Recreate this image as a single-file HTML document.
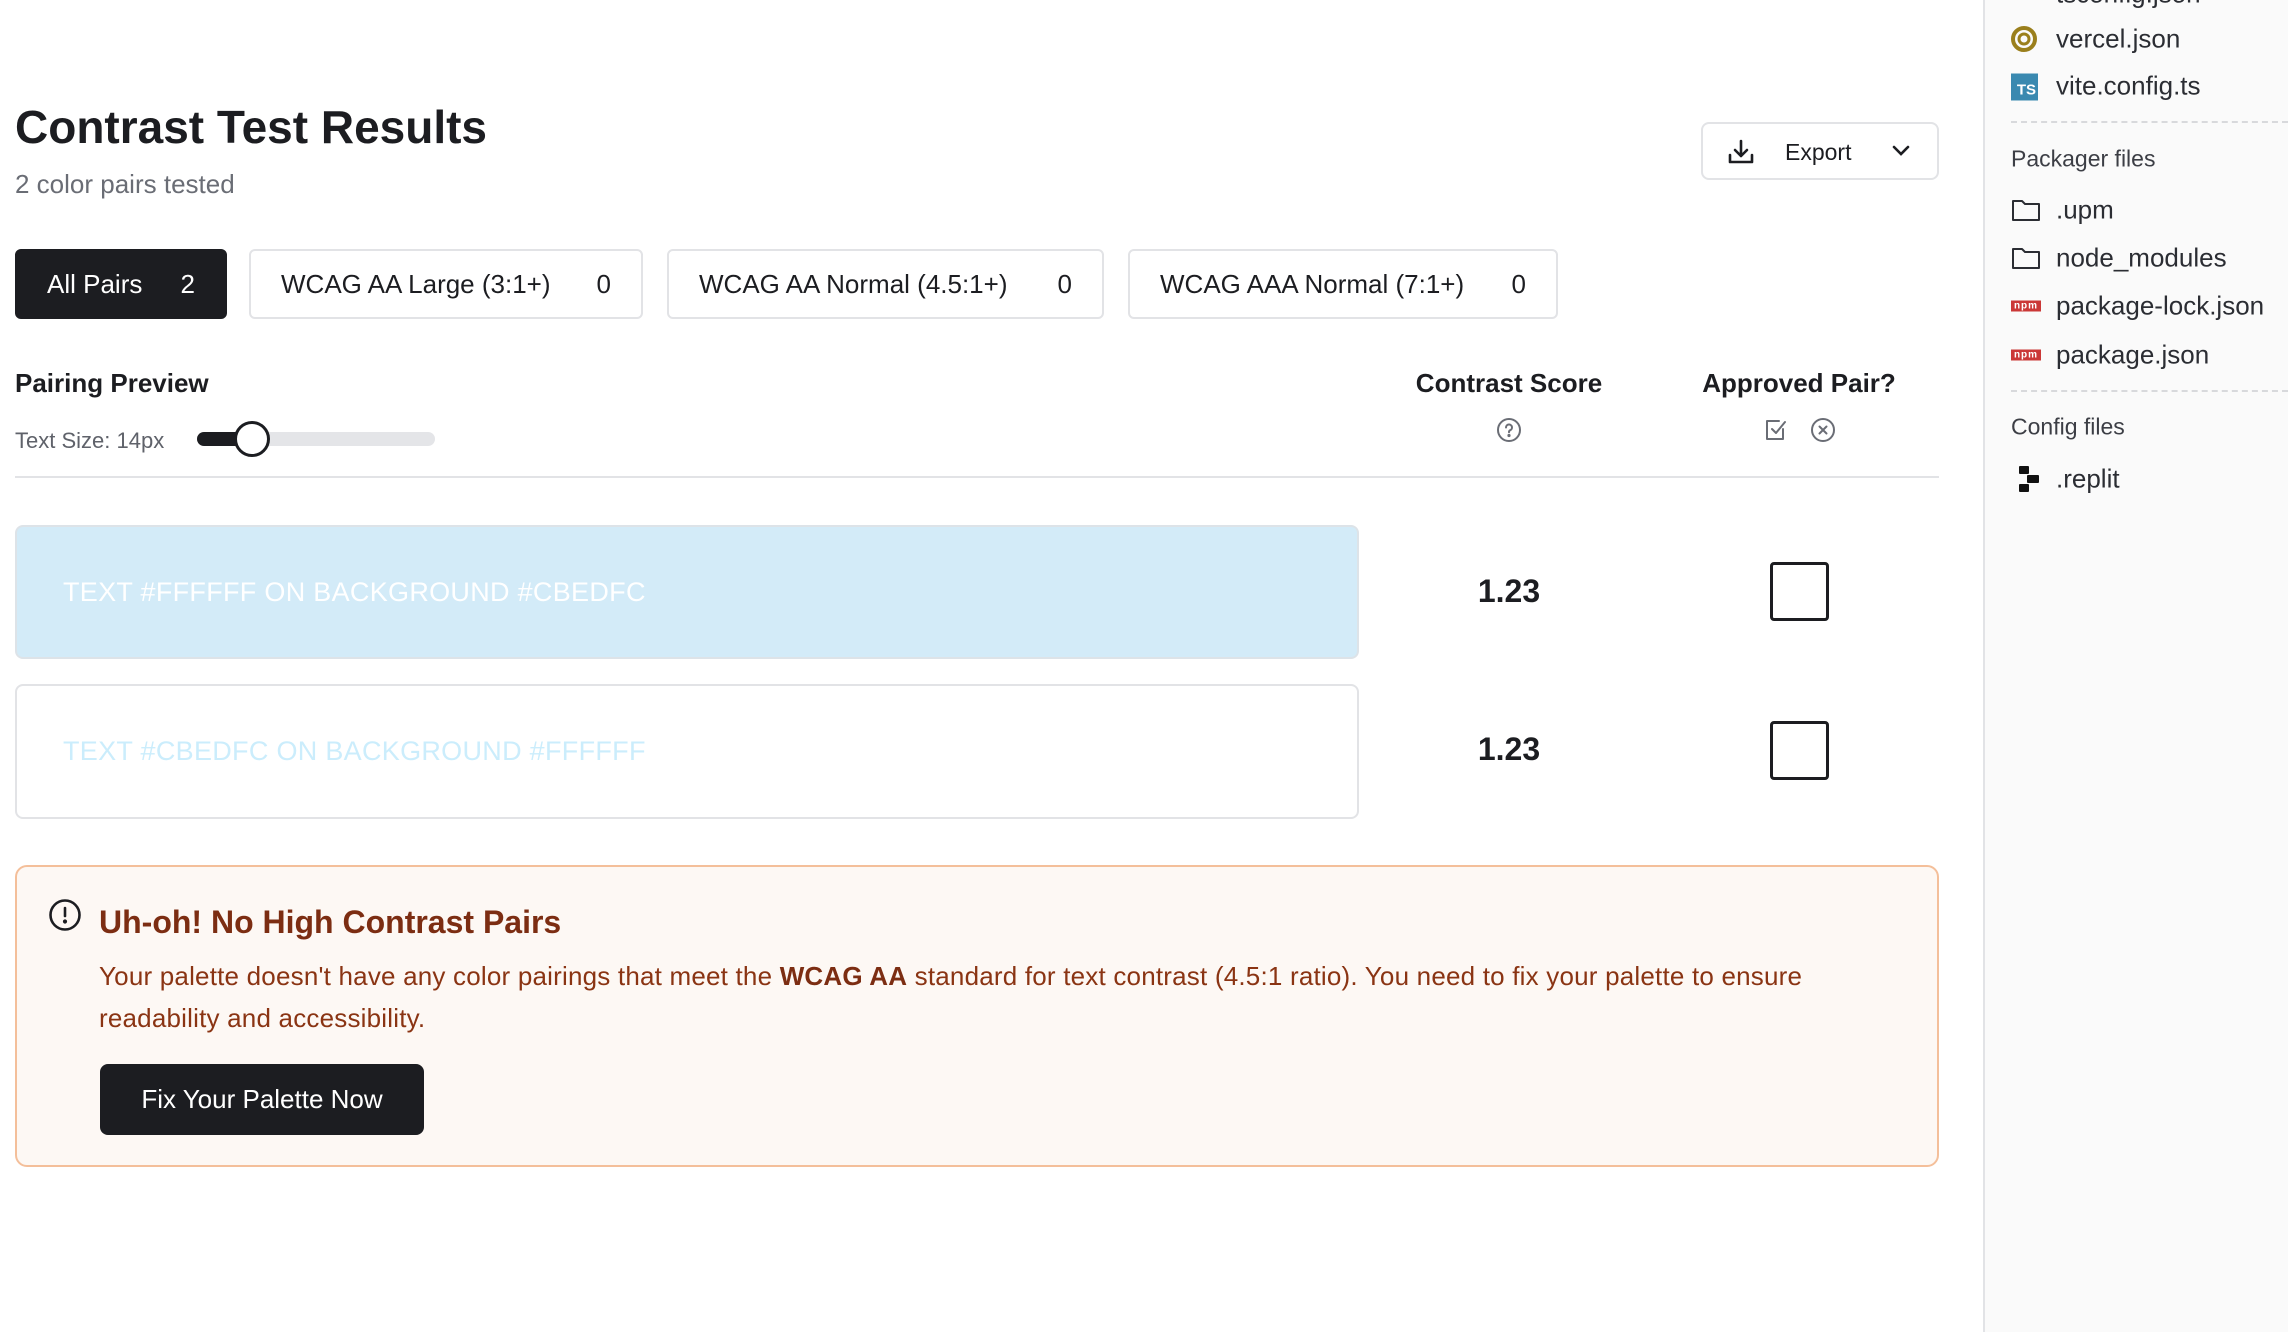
<!DOCTYPE html>
<html><head><meta charset="utf-8"><style>
*{box-sizing:border-box;margin:0;padding:0}
body{width:2288px;height:1332px;background:#fff;font-family:"Liberation Sans",sans-serif;color:#1c1d21;position:relative;overflow:hidden}
.a{position:absolute;white-space:nowrap}
.tab{position:absolute;top:249px;height:70px;border:2px solid #e2e3e6;border-radius:6px;font-size:26px;display:flex;align-items:center;padding-left:30px;background:#fff}
.tab b{font-weight:normal;position:absolute;right:30px}
.side{position:absolute;left:1983px;top:0;width:305px;height:1332px;background:#fafafa;border-left:2px solid #e2e3e6}
.si{position:absolute;left:71px;font-size:26px;color:#2b2d33;transform:translateY(-50%)}
.ic{position:absolute;left:26px;transform:translateY(-50%)}
.sh{position:absolute;left:26px;font-size:23px;color:#3c3e45;transform:translateY(-50%)}
.dash{position:absolute;left:26px;right:0;border-top:2px dashed #d8d9dc}
.npm{width:30px;height:11px;background:#cb3837;color:#fff;font-size:10px;font-weight:bold;line-height:11px;text-align:center;letter-spacing:1px}
</style></head><body>
<div class="a" style="left:15px;top:100px;font-size:46px;font-weight:bold">Contrast Test Results</div>
<div class="a" style="left:15px;top:169px;font-size:26px;color:#6a6d75">2 color pairs tested</div>

<div class="a" style="left:1701px;top:122px;width:238px;height:58px;border:2px solid #e2e3e6;border-radius:8px;font-size:23px">
<svg class="a" style="left:24px;top:15px" width="28" height="26" viewBox="0 0 28 26" fill="none" stroke="#1c1d21" stroke-width="2.6" stroke-linecap="round" stroke-linejoin="round"><path d="M14 2v15M8 11l6 6 6-6M3 16v7h22v-7"/></svg>
<span class="a" style="left:82px;top:15px">Export</span>
<svg class="a" style="left:188px;top:20px" width="20" height="14" viewBox="0 0 20 14" fill="none" stroke="#1c1d21" stroke-width="2.6" stroke-linecap="round"><path d="M3 3l7 7 7-7"/></svg>
</div>

<div class="tab" style="left:15px;width:212px;background:#1c1d21;border-color:#1c1d21;color:#fff">All Pairs<b>2</b></div>
<div class="tab" style="left:249px;width:394px">WCAG AA Large (3:1+)<b>0</b></div>
<div class="tab" style="left:667px;width:437px">WCAG AA Normal (4.5:1+)<b>0</b></div>
<div class="tab" style="left:1128px;width:430px">WCAG AAA Normal (7:1+)<b>0</b></div>

<div class="a" style="left:15px;top:368px;font-size:26px;font-weight:bold">Pairing Preview</div>
<div class="a" style="left:15px;top:428px;font-size:22px;color:#5f626a">Text Size: 14px</div>
<div class="a" style="left:197px;top:432px;width:238px;height:14px;border-radius:7px;background:#e4e5e8"></div>
<div class="a" style="left:197px;top:432px;width:56px;height:14px;border-radius:7px;background:#1c1d21"></div>
<div class="a" style="left:234px;top:421px;width:36px;height:36px;border-radius:50%;background:#fff;border:3px solid #1c1d21"></div>
<div class="a" style="left:1409px;top:368px;width:200px;text-align:center;font-size:26px;font-weight:bold">Contrast Score</div>
<svg class="a" style="left:1496px;top:417px" width="26" height="26" viewBox="0 0 26 26" fill="none" stroke="#6a6d75" stroke-width="2"><circle cx="13" cy="13" r="11"/><path d="M10 10.5a3 3 0 1 1 4 2.8c-.8.4-1 1-1 2" stroke-linecap="round"/><circle cx="13" cy="18.5" r=".6" fill="#6a6d75"/></svg>
<div class="a" style="left:1679px;top:368px;width:240px;text-align:center;font-size:26px;font-weight:bold">Approved Pair?</div>
<svg class="a" style="left:1763px;top:417px" width="26" height="26" viewBox="0 0 26 26" fill="none" stroke="#6a6d75" stroke-width="2" stroke-linecap="round" stroke-linejoin="round"><path d="M20 12v10H4V4h12"/><path d="M9 12l4 4 9-11"/></svg>
<svg class="a" style="left:1810px;top:417px" width="26" height="26" viewBox="0 0 26 26" fill="none" stroke="#6a6d75" stroke-width="2" stroke-linecap="round"><circle cx="13" cy="13" r="11"/><path d="M9.5 9.5l7 7M16.5 9.5l-7 7"/></svg>
<div class="a" style="left:15px;top:476px;width:1924px;height:2px;background:#e2e3e6"></div>

<div class="a" style="left:15px;top:525px;width:1344px;height:134px;background:#d3ebf8;border:2px solid #dde3e8;border-radius:8px"></div>
<div class="a" style="left:63px;top:577px;font-size:27px;color:#fff;letter-spacing:0.3px">TEXT #FFFFFF ON BACKGROUND #CBEDFC</div>
<div class="a" style="left:1409px;top:573px;width:200px;text-align:center;font-size:32px;font-weight:bold">1.23</div>
<div class="a" style="left:1770px;top:562px;width:59px;height:59px;border:3px solid #1c1d21;border-radius:4px"></div>

<div class="a" style="left:15px;top:684px;width:1344px;height:135px;background:#fff;border:2px solid #e2e3e6;border-radius:8px"></div>
<div class="a" style="left:63px;top:736px;font-size:27px;color:#cbedfc;letter-spacing:0.3px">TEXT #CBEDFC ON BACKGROUND #FFFFFF</div>
<div class="a" style="left:1409px;top:731px;width:200px;text-align:center;font-size:32px;font-weight:bold">1.23</div>
<div class="a" style="left:1770px;top:721px;width:59px;height:59px;border:3px solid #1c1d21;border-radius:4px"></div>

<div class="a" style="left:15px;top:865px;width:1924px;height:302px;background:#fdf8f4;border:2px solid #f4bf9a;border-radius:12px"></div>
<svg class="a" style="left:48px;top:898px" width="34" height="34" viewBox="0 0 34 34" fill="none" stroke="#1c1d21" stroke-width="2.6" stroke-linecap="round"><circle cx="17" cy="17" r="14.5"/><path d="M17 10v8"/><circle cx="17" cy="23.5" r=".8" fill="#1c1d21"/></svg>
<div class="a" style="left:99px;top:904px;font-size:32px;font-weight:bold;color:#7c2d12">Uh-oh! No High Contrast Pairs</div>
<div class="a" style="left:99px;top:955px;font-size:26px;color:#8a3413;line-height:42px;white-space:normal;width:1760px;letter-spacing:0.2px">Your palette doesn't have any color pairings that meet the <b style="color:#7c2d12">WCAG AA</b> standard for text contrast (4.5:1 ratio). You need to fix your palette to ensure readability and accessibility.</div>
<div class="a" style="left:100px;top:1064px;width:324px;height:71px;background:#1c1d21;border-radius:8px;color:#fff;font-size:26px;display:flex;align-items:center;justify-content:center">Fix Your Palette Now</div>

<div class="side">
<div class="si" style="top:-6px">tsconfig.json</div>
<svg class="ic" style="top:39px" width="26" height="26" viewBox="0 0 26 26"><circle cx="13" cy="13" r="11" fill="none" stroke="#9a7f1c" stroke-width="4"/><circle cx="13" cy="13" r="5" fill="none" stroke="#9a7f1c" stroke-width="3"/></svg>
<div class="si" style="top:39px">vercel.json</div>
<div class="ic" style="top:87px;width:27px;height:27px;background:#3a89b0;color:#fff;font-size:15px;font-weight:bold;text-align:right;padding:8px 2px 0 0;line-height:18px">TS</div>
<div class="si" style="top:86px">vite.config.ts</div>
<div class="dash" style="top:121px"></div>
<div class="sh" style="top:159px">Packager files</div>
<svg class="ic" style="top:210px" width="30" height="24" viewBox="0 0 30 24" fill="none" stroke="#2b2d33" stroke-width="2"><path d="M2 3h9l3 3h14v16H2z" stroke-linejoin="round"/></svg>
<div class="si" style="top:210px">.upm</div>
<svg class="ic" style="top:258px" width="30" height="24" viewBox="0 0 30 24" fill="none" stroke="#2b2d33" stroke-width="2"><path d="M2 3h9l3 3h14v16H2z" stroke-linejoin="round"/></svg>
<div class="si" style="top:258px">node_modules</div>
<div class="ic npm" style="top:306px">npm</div>
<div class="si" style="top:306px">package-lock.json</div>
<div class="ic npm" style="top:355px">npm</div>
<div class="si" style="top:355px">package.json</div>
<div class="dash" style="top:390px"></div>
<div class="sh" style="top:427px">Config files</div>
<svg class="ic" style="top:479px;left:34px" width="22" height="26" viewBox="0 0 22 26" fill="#111"><rect x="0" y="0" width="10" height="8" rx="1"/><rect x="8" y="9" width="12" height="8" rx="1"/><rect x="0" y="18" width="10" height="8" rx="1"/></svg>
<div class="si" style="top:479px">.replit</div>
</div>
</body></html>
